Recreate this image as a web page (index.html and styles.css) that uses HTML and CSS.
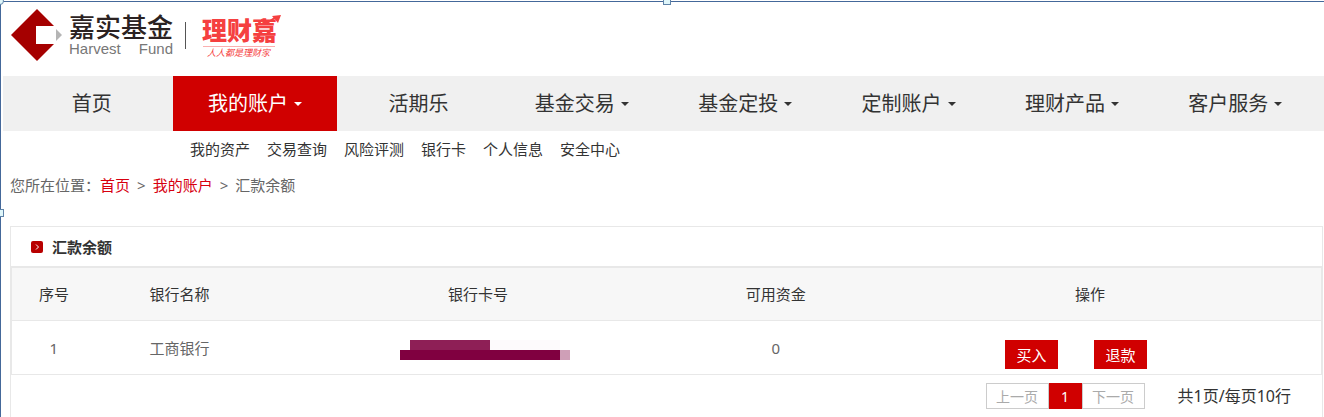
FILE: index.html
```html
<!DOCTYPE html>
<html lang="zh-CN">
<head>
    <meta charset="utf-8">
    <meta name="viewport" content="width=device-width, initial-scale=1">
    <title>汇款余额</title>
    <link rel="stylesheet" href="styles.css">
</head>
<body>
    <div class="frame">
        <span class="handle handle-corner"></span>
        <span class="handle handle-top"></span>
        <span class="handle handle-left"></span>

        <header class="header">
            <svg class="logo" width="300" height="74" viewBox="0 2 300 74" role="img" aria-label="嘉实基金">
                <polygon points="37,9 54,26 36,26 36,44 54,44 37,61 11,35" fill="#a50000"/>
                <polygon points="56,29 62,35 56,41" fill="#b5b5b5"/>
                <text class="logo-name" x="69" y="37">嘉实基金</text>
                <text class="logo-latin" x="69" y="54">Harvest</text>
                <text class="logo-latin" x="173" y="54" text-anchor="end">Fund</text>
                <rect x="185" y="22" width="1" height="27" fill="#555"/>
                <text class="logo-sub" x="202" y="40">理财嘉</text>
                <path d="M256 26L262 20L267 23L276 17" fill="none" stroke="#f54040" stroke-width="2"/>
                <path d="M272 16L281 15L278 23Z" fill="#f54040"/>
                <rect x="203" y="46" width="72" height="1" fill="#fbb0b0"/>
                <text class="logo-slogan" x="207" y="56">人人都是理财家</text>
            </svg>
        </header>

        <nav class="nav">
            <a href="#">首页</a>
            <a href="#" class="active">我的账户<i class="caret"></i></a>
            <a href="#">活期乐</a>
            <a href="#">基金交易<i class="caret"></i></a>
            <a href="#">基金定投<i class="caret"></i></a>
            <a href="#">定制账户<i class="caret"></i></a>
            <a href="#">理财产品<i class="caret"></i></a>
            <a href="#">客户服务<i class="caret"></i></a>
        </nav>

        <div class="subnav">
            <a href="#">我的资产</a>
            <a href="#">交易查询</a>
            <a href="#">风险评测</a>
            <a href="#">银行卡</a>
            <a href="#">个人信息</a>
            <a href="#">安全中心</a>
        </div>

        <div class="breadcrumb">
            <span>您所在位置：<a href="#">首页</a></span>
            <span>&gt;</span>
            <a href="#">我的账户</a>
            <span>&gt;</span>
            <span>汇款余额</span>
        </div>

        <main class="panel">
            <h2 class="panel-title">
                <svg width="12" height="12" viewBox="0 0 12 12">
                    <rect width="12" height="12" rx="2" fill="#b80000"/>
                    <path d="M5 3.5L7.5 6L5 8.5" fill="none" stroke="#fff"/>
                </svg>
                汇款余额
            </h2>

            <table class="list">
                <thead>
                    <tr>
                        <th class="col-no">序号</th>
                        <th class="col-bank">银行名称</th>
                        <th class="col-card">银行卡号</th>
                        <th class="col-money">可用资金</th>
                        <th>操作</th>
                    </tr>
                </thead>
                <tbody>
                    <tr>
                        <td>1</td>
                        <td>工商银行</td>
                        <td>
                            <svg class="mask" width="184" height="20" viewBox="0 0 184 20">
                                <rect x="24" width="80" height="10" fill="#8e1f56"/>
                                <rect x="104" width="70" height="10" fill="#fdfafc"/>
                                <rect x="14" y="10" width="160" height="10" fill="#800040"/>
                                <rect x="174" y="10" width="10" height="10" fill="#cf9fb7"/>
                            </svg>
                        </td>
                        <td>0</td>
                        <td>
                            <div class="actions">
                                <button type="button" class="btn">买入</button>
                                <button type="button" class="btn">退款</button>
                            </div>
                        </td>
                    </tr>
                </tbody>
            </table>

            <div class="pager">
                <div class="pages">
                    <button type="button">上一页</button>
                    <button type="button" class="current">1</button>
                    <button type="button">下一页</button>
                </div>
                <span class="total">共1页/每页10行</span>
            </div>
        </main>
    </div>
</body>
</html>
```

FILE: styles.css
```css
* {
    box-sizing: border-box;
}

body {
    margin: 0;
    background-color: #fff;
    color: #333;
    font-family: "Noto Sans", "Noto Sans CJK SC", sans-serif;
    font-size: 15px;
    line-height: 24px;
}

a {
    color: inherit;
    text-decoration: none;
}

button {
    font-family: inherit;
    cursor: pointer;
}

.frame {
    position: relative;
    display: flex;
    flex-direction: column;
    min-height: 100vh;
    margin-top: 1px;
    border-top: 1px solid #44689a;
    border-left: 1px solid #44689a;
}

/* selection handles */
.handle {
    position: absolute;
    width: 8px;
    height: 8px;
    border: 1px solid #5f83a8;
    background-color: #dff6fa;
}

.handle-corner {
    top: -5px;
    left: -5px;
    border-radius: 50%;
}

.handle-top {
    top: -5px;
    left: 50%;
}

.handle-left {
    top: 207px;
    left: -5px;
}

.header {
    height: 74px;
    margin-left: -1px;
}

.logo {
    display: block;
}

.logo-name {
    font-size: 26px;
    font-weight: 500;
    fill: #2b2222;
}

.logo-latin {
    font-family: "Liberation Sans", sans-serif;
    font-size: 15px;
    fill: #777;
}

.logo-sub {
    font-size: 25px;
    font-weight: 900;
    fill: #f54040;
}

.logo-slogan {
    font-size: 9px;
    font-style: italic;
    fill: #f54040;
}

.nav {
    display: grid;
    grid-template-columns: repeat(8, 1fr);
    margin-left: 2px;
    padding: 0 7px;
    background-color: #f0f0f0;
    font-size: 20px;
    line-height: 55px;
}

.nav a {
    display: flex;
    align-items: center;
    justify-content: center;
    gap: 6px;
    height: 55px;
}

.nav .active {
    background-color: #d00000;
    color: #fff;
}

.caret {
    border: 4px solid transparent;
    border-top-color: currentColor;
    border-bottom: 0;
}

.subnav {
    display: flex;
    gap: 17px;
    padding: 6px 0 6px 189px;
}

.breadcrumb {
    display: flex;
    gap: 7px;
    padding: 6px 9px;
    color: #666;
}

.breadcrumb a {
    color: #d7000f;
}

.panel {
    flex: 1;
    margin: 23px 1px 0 9px;
    border: 1px solid #e8e8e8;
    border-bottom: 0;
}

.panel-title {
    display: flex;
    align-items: center;
    gap: 9px;
    height: 39px;
    margin: 0;
    padding-left: 20px;
    font-size: 15px;
    font-weight: 700;
}

.list {
    width: 100%;
    table-layout: fixed;
    border-collapse: separate;
    border-spacing: 0;
    border: 1px solid #e8e8e8;
    border-top-width: 2px;
}

.list th,
.list td {
    padding: 0;
    height: 53px;
    text-align: center;
    font-weight: 400;
}

.list th {
    background-color: #f7f7f7;
    border-bottom: 1px solid #e8e8e8;
}

.list td {
    color: #666;
}

.col-no {
    width: 6.4%;
}

.col-bank {
    width: 12.8%;
}

.col-card {
    width: 32.8%;
}

.col-money {
    width: 12.7%;
}

.mask {
    display: block;
    margin: 4px auto 0;
}

.actions {
    display: flex;
    justify-content: center;
    gap: 36px;
    padding: 14px 28px 0 0;
}

.btn {
    width: 53px;
    height: 29px;
    padding: 0;
    border: 0;
    background-color: #d00000;
    color: #fff;
    font-size: 15px;
}

.pager {
    display: flex;
    align-items: center;
    justify-content: flex-end;
    gap: 33px;
    padding: 8px 31px 8px 0;
}

.pages {
    display: flex;
}

.pages button {
    width: 63px;
    height: 26px;
    padding: 0;
    border: 1px solid #ccc;
    background-color: #fff;
    color: #aaa;
    font-size: 14px;
}

.pages .current {
    width: 33px;
    border-color: #d00000;
    background-color: #d00000;
    color: #fff;
}

.total {
    font-size: 16px;
}
```
